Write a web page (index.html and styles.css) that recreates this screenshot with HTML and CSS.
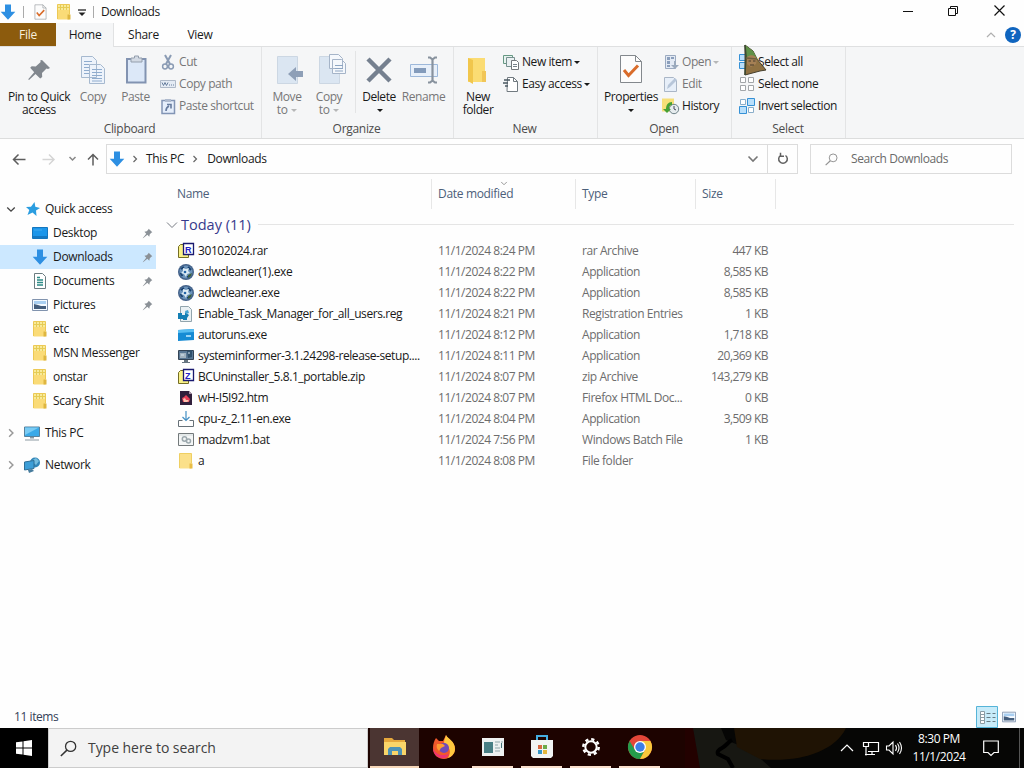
FILE: index.html
```html
<!DOCTYPE html>
<html lang="en">
<head>
  <meta charset="UTF-8" />
  <meta name="viewport" content="width=device-width, initial-scale=1.0" />
  <title>Downloads</title>
  <link rel="stylesheet" href="styles.css">
</head>
<body>
  <svg class="defs" width="0" height="0">
    <symbol id="down-arrow" viewBox="0 0 16 16"><path d="M5 .5h6v7.2h4.3L8 15.7.7 7.7H5z" fill="#2d8fe2"/></symbol>
    <symbol id="folder" viewBox="0 0 16 16"><path d="M1.500.5h12v15h-12z" fill="#fbe08a"/><path d="M11.500 10.500h3v5h-3z" fill="#e9bd45"/><path d="M1.500 15V.5h12v10" fill="none" stroke="#efcf62"/></symbol>
    <symbol id="folder-zip" viewBox="0 0 16 16"><path d="M1.500.5h12v15h-12z" fill="#fadb77"/><path d="M2 1h11v5H2z" fill="#f8ea9a"/><path d="M4.500 1v5M7.500 1v5M10.500 1v5M2 3.500h11" stroke="#e6cc55" fill="none"/><path d="M11.500 10.500h3v5h-3z" fill="#dfb640"/><path d="M1.500 15V.5h12v10" fill="none" stroke="#ecc955"/></symbol>
    <symbol id="pin" viewBox="0 0 16 16"><path d="M9.700 1l5.300 5.200-1.500.8-2.300 2.300-.6 3.400-2.800-2.800L2 14.500l-1 .5.500-1L6.200 8.300 3.500 5.500l3.400-.8L9 2.400z" fill="#8b9197"/></symbol>
    <symbol id="chev-right" viewBox="0 0 8 8"><path d="M2.500 1l3 3-3 3" fill="none" stroke="currentColor" stroke-width="1.200"/></symbol>
    <symbol id="chev-down" viewBox="0 0 12 8"><path d="M1.500 1.500L6 6l4.500-4.500" fill="none" stroke="currentColor" stroke-width="1.600"/></symbol>
    <symbol id="orb" viewBox="0 0 16 16"><circle cx="8" cy="8" r="8" fill="#44628a"/><circle cx="8" cy="8" r="6.500" fill="#6c94bb"/><path d="M3 5l3-2M10 3l3 3M2.500 9l2 3M9 13l3-1" stroke="#16406f" stroke-width="1.800"/><path d="M5 4l3 1 3-1-1 3 2 2-3 1-1 3-2-3-3-1 2-2z" fill="#dcebf4"/><path d="M10 11l4-2-1 3-3 2z" fill="#3c5e3f"/><circle cx="7" cy="8" r="1.300" fill="#2263a6"/></symbol>
    <symbol id="monitor" viewBox="0 0 16 16"><path d="M.5 2h15v9.500H.5z" fill="#39a9e8" stroke="#58819b"/><path d="M1 2.500h14L1 10z" fill="#79cbf4"/><path d="M6 12h4v1.500H6z" fill="#8398a4"/><path d="M1 15h14" stroke="#8b99a2"/></symbol>
    <symbol id="check-page" viewBox="0 0 24 30"><path d="M1.500 1.500h15l6 6v21h-21z" fill="#fcfcfc" stroke="#83888d"/><path d="M16.500 1.500v6h6" fill="none" stroke="#83888d"/><path d="M5 16l4.500 5.500L19 11.500" fill="none" stroke="#d96c2b" stroke-width="3"/></symbol>
    <symbol id="magnifier" viewBox="0 0 16 16"><circle cx="10" cy="6" r="4.800" fill="none" stroke="currentColor" stroke-width="1.200"/><path d="M6.500 9.500L.8 15" stroke="currentColor" stroke-width="1.400"/></symbol>
    <symbol id="photo" viewBox="0 0 16 12"><path d="M.5.500h15v11H.5z" fill="#f5faff" stroke="#8193ae"/><path d="M2 2h12v3H2z" fill="#a9cff1"/><path d="M2 5l4 1 3 1h5v3H2z" fill="#445d7c"/></symbol>
  </svg>

  <div class="window">
    <header class="titlebar">
      <svg class="i16 title-arrow"><use href="#down-arrow"/></svg>
      <span class="bar"></span>
      <svg class="title-check" width="13" height="16"><use href="#check-page"/></svg>
      <svg class="i16 title-folder"><use href="#folder-zip"/></svg>
      <svg class="title-drop" width="8" height="8" viewBox="0 0 8 8"><path d="M0 1h8" stroke="#222" stroke-width="1.300"/><path d="M.5 3.500h7L4 7z" fill="#222"/></svg>
      <span class="bar"></span>
      <span class="title">Downloads</span>
      <div class="controls">
        <svg width="46" height="23"><path d="M18 11.500h10" stroke="#111"/></svg>
        <svg width="46" height="23" fill="none" stroke="#111"><path d="M17.500 8.500h7v7h-7zM19.500 8V6.500h7v7H25"/></svg>
        <svg width="46" height="23"><path d="M17.500 5.500l10 10M27.500 5.500l-10 10" stroke="#111" stroke-width="1.200"/></svg>
      </div>
    </header>

    <nav class="tabs">
      <span class="tab file">File</span>
      <span class="tab home">Home</span>
      <span class="tab share">Share</span>
      <span class="tab view">View</span>
      <div class="tab-tools">
        <svg width="10" height="6" viewBox="0 0 10 6"><path d="M1 5l4-4 4 4" fill="none" stroke="#b0b0b0" stroke-width="1.200"/></svg>
        <span class="help">?</span>
      </div>
    </nav>

    <section class="ribbon">
      <div class="group clipboard">
        <div class="tools">
          <div class="big w70"><svg width="34" height="32" viewBox="0 0 34 32"><path d="M20 7l8 8-2 1-1.500-.5-4.500 4.500.2 4-2 1.500-4.700-4.600L7 27l-.8-.7 6-7-4-4.500 1.500-1.500 4 .3 5-4.500-.5-1.700z" fill="#81878e" transform="translate(0 -1)"/></svg><span>Pin to Quick<br>access</span></div>
          <div class="big w38 off"><svg width="34" height="32" viewBox="0 0 34 32"><path d="M5.500 2.500h11l4 4v17h-15zM13.500 10.500h11l4 4v15h-15z" fill="#edf3fb" stroke="#a6b9cf"/><path d="M8 7.500h8M8 10.500h5M8 13.500h5M8 16.500h5M8 19.500h5M16 15.500h10M16 18.500h10M16 21.500h10M16 24.500h10M16 27h10" stroke="#8facce"/></svg><span>Copy</span></div>
          <div class="big w46 off"><svg width="34" height="32" viewBox="0 0 34 32"><path d="M8 5h18.500v23.500H8z" fill="#dce8f8" stroke="#8293b1" stroke-width="2"/><path d="M12 4h3.500V2h4v2H23v4H12z" fill="#d3dae4" stroke="#939eac"/></svg><span>Paste</span></div>
          <div class="list">
            <div class="small off"><svg class="i16" viewBox="0 0 16 16" fill="none" stroke="#8a9bb4"><path d="M5 1l5 9M11 1L6 10" stroke-width="2"/><circle cx="5" cy="12.500" r="2.400" stroke-width="1.500"/><circle cx="11" cy="12.500" r="2.400" stroke-width="1.500"/></svg>Cut</div>
            <div class="small off"><svg class="i16" viewBox="0 0 16 16" fill="none"><path d="M.5 4.500h15v7H.5z" fill="#e4ebf4" stroke="#aeb9c8"/><path d="M2 6.500l1.500 3L5 6.500l1.500 3L8 6.500M9 9h1m1 0h1m1 0h1" stroke="#687f9e"/></svg>Copy path</div>
            <div class="small off"><svg class="i16" viewBox="0 0 16 16"><path d="M2 2.500h12.500v13H2z" fill="#e5eefb" stroke="#8295b5" stroke-width="1.500"/><path d="M5 1h6v3H5z" fill="#aebace"/><path d="M6 13c0-3 1-4 3-5M7 6.500h4v4" fill="none" stroke="#667b9e" stroke-width="1.600"/></svg>Paste shortcut</div>
          </div>
        </div>
        <div class="caption">Clipboard</div>
      </div>
      <div class="group organize">
        <div class="tools">
          <div class="big w42 off"><svg width="34" height="32" viewBox="0 0 34 32"><path d="M7.500 2.500h20v27h-20z" fill="#dbe6f2" stroke="#ccd7e3"/><path d="M33 17v6h-7v4l-8-7 8-7v4z" fill="#8e9fb7"/></svg><span>Move<br>to <i></i></span></div>
          <div class="big w42 off"><svg width="34" height="32" viewBox="0 0 34 32"><path d="M7.500 2.500h20v27h-20z" fill="#dbe6f2" stroke="#ccd7e3"/><path d="M17.500.5h9l4 4v10h-13zM20.500 5.500h9l4 4v10h-13z" fill="#f5f8fc" stroke="#a5b4c8"/><path d="M23 11.500h8M23 14.500h8M23 17h8" stroke="#8da5c2"/></svg><span>Copy<br>to <i></i></span></div>
          <span class="split"></span>
          <div class="big w40"><svg width="34" height="32" viewBox="0 0 34 32"><path d="M6 5l22 22M28 5L6 27" stroke="#75808f" stroke-width="4.500"/></svg><span>Delete<br><i></i></span></div>
          <div class="big w48 off"><svg width="34" height="32" viewBox="0 0 34 32"><path d="M3.500 10.500h27v12h-27z" fill="#e8f0fa" stroke="#9db8da"/><path d="M7 14h12v5H7z" fill="#839bbb"/><path d="M21 3.500h2l2.500 2v21l-2.500 2h-2M30 3.500h-2l-2.500 2M30 28.500h-2l-2.500-2" fill="none" stroke="#88929e" stroke-width="2.200"/></svg><span>Rename</span></div>
        </div>
        <div class="caption">Organize</div>
      </div>
      <div class="group new">
        <div class="tools">
          <div class="big w40"><svg width="34" height="32" viewBox="0 0 34 32"><path d="M7 4h17v24H7z" fill="#fbdc73"/><path d="M7 4l5 2v24l-5-3z" fill="#f1c64c"/><path d="M21 17h4v11h-4z" fill="#f1c658"/></svg><span>New<br>folder</span></div>
          <div class="list">
            <div class="small"><svg class="i16" viewBox="0 0 16 16"><path d="M.5 1.500h9v8h-9z" fill="#e7f2ef" stroke="#659883"/><path d="M3.500 3.500h8v9h-8z" fill="#eaf0f2" stroke="#77918f"/><path d="M8.500 6.500h5l2 2v7h-7z" fill="#fff" stroke="#74777b"/><path d="M10 10.500h4M10 12.500h4" stroke="#77818a"/></svg>New item <i></i></div>
            <div class="small"><svg class="i16" viewBox="0 0 16 16"><path d="M4.500 1.500h6l4 4v10H4z" fill="#fff" stroke="#717a80"/><path d="M10.500 1.500v4h4" fill="none" stroke="#717a80"/><path d="M1 4h6M0 7h5M2 10h3" stroke="#4b5963" stroke-width="1.300"/></svg>Easy access <i></i></div>
          </div>
        </div>
        <div class="caption">New</div>
      </div>
      <div class="group open">
        <div class="tools">
          <div class="big w56"><svg class="properties" width="24" height="30"><use href="#check-page"/></svg><span>Properties<br><i></i></span></div>
          <div class="list">
            <div class="small off"><svg class="i16" viewBox="0 0 16 16"><path d="M2.500 1.500h10v13h-10z" fill="#e3eaf4" stroke="#9baac0"/><path d="M4 3h3v3H4zM4 7h3v3H4zM4 11h3v2H4zM8 3h3v2H8z" fill="#8b9fbc"/><path d="M11 7h2v4h3l-4 4-4-4h3z" fill="#9baabd"/></svg>Open <i></i></div>
            <div class="small off"><svg class="i16" viewBox="0 0 16 16"><path d="M1.500 1.500h9l3 3v11h-12z" fill="#e7eff9" stroke="#aab6c6"/><path d="M4 13l1-4 7-7 2 2-7 7z" fill="#b7c6d9"/></svg>Edit</div>
            <div class="small"><svg class="i16" viewBox="0 0 16 16"><path d="M-1 .5h12v13H-1z" fill="#f6df78"/><circle cx="11" cy="11" r="4.700" fill="#e6ecee" stroke="#6e8288"/><path d="M11 8v3l2 1" fill="none" stroke="#445"/><path d="M9 4v3c-2 0-3 1-3 4h2l-4 4-4-4h3c0-4 2-7 6-7z" fill="#46a135"/></svg>History</div>
          </div>
        </div>
        <div class="caption">Open</div>
      </div>
      <div class="group select">
        <div class="tools">
          <div class="list">
            <div class="small"><svg class="i16" viewBox="0 0 16 16" fill="#b9dffb" stroke="#3591d6"><path d="M.5.5h6v6h-6zM8.500.5h6v6h-6zM.5 8.500h6v6h-6zM8.500 8.500h6v6h-6z"/></svg>Select all</div>
            <div class="small"><svg class="i16" viewBox="0 0 16 16" fill="#fff" stroke="#a3a6a9"><path d="M1.500 1.500h5v5h-5zM9.500 1.500h5v5h-5zM1.500 9.500h5v5h-5zM9.500 9.500h5v5h-5z"/></svg>Select none</div>
            <div class="small"><svg class="i16" viewBox="0 0 16 16"><path d="M1.500 1.500h5v5h-5zM9.500 9.500h5v5h-5z" fill="#fff" stroke="#8aaeca"/><path d="M8.500.5h7v7h-7zM.5 8.500h7v7h-7z" fill="#b9dffb" stroke="#3591d6"/></svg>Invert selection</div>
          </div>
        </div>
        <div class="caption">Select</div>
        <svg class="cursor" width="24" height="32" viewBox="0 0 24 32"><path d="M2 1l8 6 4 8 9 11-6 1-15 4z" fill="#8f7142" stroke="#46402e"/><path d="M2 1l8 6 5 9-12-3z" fill="#5f9148"/><path d="M2 1l1 11-1 19" fill="none" stroke="#3b4830" stroke-width="1.500"/><path d="M4 13c4-3 8-2 10 2l-1 5-5 3-4-3z" fill="#a58055"/><path d="M5.500 17h2.500M10 17h2.500M7 21h4" stroke="#463c2d"/><path d="M3 14l11 1" stroke="#6d6040" stroke-width="1.500"/></svg>
      </div>
    </section>

    <div class="address-row">
      <div class="nav-buttons">
        <svg width="106" height="30" fill="none" stroke="#5d5d5d" stroke-width="1.500"><path d="M18.500 10.500l-5 5 5 5M14 15.500h11.500"/><path d="M49 10.500l5 5-5 5M53 15.500H42.500" stroke="#d5d5d5"/><path d="M69.500 13l3 3 3-3" stroke="#888"/><path d="M88 15.500l5-5 5 5M93 11v10.500"/></svg>
      </div>
      <div class="address">
        <svg class="i16 address-icon"><use href="#down-arrow"/></svg>
        <svg class="crumb-arrow"><use href="#chev-right"/></svg>
        <span>This PC</span>
        <svg class="crumb-arrow second"><use href="#chev-right"/></svg>
        <span>Downloads</span>
        <svg class="address-drop" width="12" height="8"><use href="#chev-down"/></svg>
        <span class="refresh"><svg width="14" height="14" viewBox="0 0 14 14" fill="none" stroke="#606060" stroke-width="1.500"><path d="M9.500 3.500a4.300 4.300 0 1 1-5 0M4.500.8v3.400H8"/></svg></span>
      </div>
      <div class="search"><svg width="13" height="13"><use href="#magnifier"/></svg>Search Downloads</div>
    </div>

    <main class="main">
      <aside class="sidebar">
        <div class="side root"><svg class="expander open-arrow"><use href="#chev-down"/></svg><svg width="14" height="14" viewBox="0 0 14 14"><path d="M8.500 0l.8 4.800L14 6l-4 2.500.5 5.500-4-3.500L1.500 13l1.800-5L0 5l5-.3z" fill="#2a9de0"/></svg><span>Quick access</span></div>
        <div class="side"><svg class="i16" viewBox="0 0 16 16"><path d="M.5 2.500h15v11H.5z" fill="#1c96ea" stroke="#1476be"/><path d="M1 12h14" stroke="#0e5b99"/><path d="M2 5h8" stroke="#42acf0"/></svg><span>Desktop</span><svg class="side-pin"><use href="#pin"/></svg></div>
        <div class="side selected"><svg class="i16"><use href="#down-arrow"/></svg><span>Downloads</span><svg class="side-pin"><use href="#pin"/></svg></div>
        <div class="side"><svg class="i16" viewBox="0 0 16 16"><path d="M2.500.5h8l3 3v12h-11z" fill="#fff" stroke="#6b7c80"/><path d="M5 4.500h3M5 7h6M5 9.500h6M5 12h6" stroke="#2d8b86" stroke-width="1.300"/></svg><span>Documents</span><svg class="side-pin"><use href="#pin"/></svg></div>
        <div class="side"><svg class="i16"><use href="#photo"/></svg><span>Pictures</span><svg class="side-pin"><use href="#pin"/></svg></div>
        <div class="side"><svg class="i16"><use href="#folder-zip"/></svg><span>etc</span></div>
        <div class="side"><svg class="i16"><use href="#folder-zip"/></svg><span>MSN Messenger</span></div>
        <div class="side"><svg class="i16"><use href="#folder-zip"/></svg><span>onstar</span></div>
        <div class="side"><svg class="i16"><use href="#folder-zip"/></svg><span>Scary Shit</span></div>
        <div class="side root spaced"><svg class="expander"><use href="#chev-right"/></svg><svg class="i16"><use href="#monitor"/></svg><span>This PC</span></div>
        <div class="side root spaced"><svg class="expander"><use href="#chev-right"/></svg><svg class="i16" viewBox="0 0 16 16"><circle cx="11" cy="5.500" r="5" fill="#3286b8"/><path d="M7 4l5-3 3 3-3 4z" fill="#75bddf"/><path d="M.5 5l9.500-1.500v8L.5 13z" fill="#3d9ed7" stroke="#2f6f97"/><path d="M4 13l4-1 2 2-5 2z" fill="#477c9d"/></svg><span>Network</span></div>
      </aside>

      <div class="files">
        <div class="row columns"><span>Name</span><span>Date modified<svg class="sort" width="8" height="5"><use href="#chev-down"/></svg></span><span>Type</span><span>Size</span></div>
        <div class="group-title"><svg width="12" height="8" viewBox="0 0 12 8"><path d="M1 1.500l5 5 5-5" fill="none" stroke="#777b83"/></svg><span>Today (11)</span><hr></div>
        <div class="row"><span class="name"><svg class="i16" viewBox="0 0 16 16"><path d="M.5 3.500l2-2h4v10h4v3H.5z" fill="#f9f187" stroke="#746d24"/><path d="M5.500.5h10v11h-10z" fill="#fff" stroke="#19196f" stroke-width="1.300"/><text x="7" y="9.500" class="badge">R</text></svg>30102024.rar</span><span class="date">11/1/2024 8:24 PM</span><span>rar Archive</span><span>447 KB</span></div>
        <div class="row"><span class="name"><svg class="i16"><use href="#orb"/></svg>adwcleaner(1).exe</span><span class="date">11/1/2024 8:22 PM</span><span>Application</span><span>8,585 KB</span></div>
        <div class="row"><span class="name"><svg class="i16"><use href="#orb"/></svg>adwcleaner.exe</span><span class="date">11/1/2024 8:22 PM</span><span>Application</span><span>8,585 KB</span></div>
        <div class="row"><span class="name"><svg class="i16" viewBox="0 0 16 16"><path d="M2.500.5h8l3 3v12h-11z" fill="#eaf1f4" stroke="#91a4ad"/><path d="M0 7h4v2h3V6l4 3-2 3v2H5v-1H0z" fill="#147fb4"/><path d="M7 5l3-1 1 3-3 1z" fill="#43a3d1"/></svg>Enable_Task_Manager_for_all_users.reg</span><span class="date">11/1/2024 8:21 PM</span><span>Registration Entries</span><span>1 KB</span></div>
        <div class="row"><span class="name"><svg class="i16" viewBox="0 0 16 16"><path d="M0 3l16-1v11L0 14z" fill="#168bd4"/><path d="M0 3l16-1v3L0 6z" fill="#58bdf1"/><path d="M8 9h5" stroke="#c9edff" stroke-width="1.500"/></svg>autoruns.exe</span><span class="date">11/1/2024 8:12 PM</span><span>Application</span><span>1,718 KB</span></div>
        <div class="row"><span class="name"><svg class="i16" viewBox="0 0 16 16"><path d="M.5 2.500h15v9H.5z" fill="#5a7894" stroke="#344454"/><path d="M2 5h6v5H2z" fill="#a2b3bf"/><path d="M9 3l5-1v7l-4 1z" fill="#30516c"/><path d="M10 5h2M3 7h3" stroke="#d6e7f2"/><path d="M6 12h4v2h2v1H4v-1h2z" fill="#667581"/></svg>systeminformer-3.1.24298-release-setup....</span><span class="date">11/1/2024 8:11 PM</span><span>Application</span><span>20,369 KB</span></div>
        <div class="row"><span class="name"><svg class="i16" viewBox="0 0 16 16"><path d="M.5 3.500l2-2h4v10h4v3H.5z" fill="#f9f187" stroke="#746d24"/><path d="M5.500.5h10v11h-10z" fill="#fff" stroke="#19196f" stroke-width="1.300"/><text x="7" y="9.500" class="badge">Z</text></svg>BCUninstaller_5.8.1_portable.zip</span><span class="date">11/1/2024 8:07 PM</span><span>zip Archive</span><span>143,279 KB</span></div>
        <div class="row"><span class="name"><svg class="i16" viewBox="0 0 16 16"><path d="M2 1h9l3 3v11H2z" fill="#31203c"/><path d="M11 1v3h3z" fill="#a790a4"/><path d="M4 8l2-1 2-2 4 4-1 3H5z" fill="#e84059"/><path d="M5 9l2-1 1 2h2l1 1-2 1H6z" fill="#ffc4b1"/></svg>wH-I5I92.htm</span><span class="date">11/1/2024 8:07 PM</span><span>Firefox HTML Doc...</span><span>0 KB</span></div>
        <div class="row"><span class="name"><svg class="i16" viewBox="0 0 16 16" fill="none"><path d="M4.500 9.500h-4v6h15v-6h-4" stroke="#667077"/><path d="M8 0v9M4.500 6L8 9.500 11.500 6" stroke="#438fc4" stroke-width="1.200"/></svg>cpu-z_2.11-en.exe</span><span class="date">11/1/2024 8:04 PM</span><span>Application</span><span>3,509 KB</span></div>
        <div class="row"><span class="name"><svg class="i16" viewBox="0 0 16 16"><path d="M.5 1.500h15v12H.5z" fill="#f4f6f6" stroke="#73797b"/><path d="M1 3h14" stroke="#d4dcdd"/><circle cx="6.500" cy="7" r="2.200" fill="none" stroke="#9ca8ad" stroke-width="1.500"/><circle cx="10.500" cy="9" r="2" fill="none" stroke="#9ca8ad" stroke-width="1.500"/></svg>madzvm1.bat</span><span class="date">11/1/2024 7:56 PM</span><span>Windows Batch File</span><span>1 KB</span></div>
        <div class="row"><span class="name"><svg class="i16"><use href="#folder"/></svg>a</span><span class="date">11/1/2024 8:08 PM</span><span>File folder</span><span></span></div>
      </div>
    </main>

    <footer class="status"><span>11 items</span>
      <svg class="details-view" width="22" height="22" viewBox="0 0 22 22"><path d="M.5.5h21v21H.5z" fill="#c7ebf9" stroke="#55b4d8"/><path d="M4.500 5.500h4v12h-4zM4.500 8.500h4M4.500 11.500h4M4.500 14.500h4" fill="#fff" stroke="#8b9ca4"/><path d="M10.500 7.500h4m2 0h3M10.500 11.500h4m2 0h3M10.500 15.500h4m2 0h3" stroke="#667b84"/></svg>
      <svg width="14" height="12"><use href="#photo"/></svg>
    </footer>
  </div>

  <footer class="taskbar">
    <svg class="wall" width="339" height="40"><path d="M0 0h339v40H0z" fill="#060605"/><path d="M0 0h10l5 40H0z" fill="#230100"/><path d="M8 0h28l5 12 25 10 20 18H15z" fill="#171712"/><path d="M49 0h112c-12 25-50 35-86 31L52 19z" fill="#1f1304"/><path d="M47 12c-4 2-6 6-10 8s-5 4-4 6l10 5 5 9" fill="none" stroke="#000" stroke-width="4"/></svg>
    <div class="start"><svg width="16" height="16" viewBox="0 0 16 16" fill="#fff"><path d="M0 2.300l6.500-.9v6.100H0zM7.500 1.200L16 0v7.500H7.500zM0 8.500h6.500v6.100L0 13.700zM7.500 8.500H16V16l-8.500-1.200z"/></svg></div>
    <div class="task-search"><svg width="17" height="17"><use href="#magnifier"/></svg>Type here to search</div>
    <div class="apps">
      <div class="app active"><svg width="22" height="20" viewBox="0 0 22 20"><path d="M0 1h8l2 2h11v5H0z" fill="#e5a83c"/><path d="M0 5h22v13H0z" fill="#f9d569"/><path d="M4 18v-6l2-2h10l2 2v6h-4v-4H8v4z" fill="#4d93b6"/></svg></div>
      <div class="app"><svg width="24" height="24" viewBox="0 0 24 24"><path d="M4 3l3 3h4l3-6c1 4 7 5 9 12 1 7-5 12-11 12S1 20 1 13c0-4 1-7 3-10z" fill="#f1592b"/><path d="M14 0c2 4 9 6 9 14 0 5-4 8-7 9 4-7 1-11-3-14-2-2 0-5 1-9z" fill="#ffc83f"/><path d="M1 13c3 8 10 8 16 6-2 4-5 5-8 4-5-1-8-5-8-10z" fill="#ed3470"/><circle cx="12" cy="13" r="5" fill="#704bb8"/><path d="M5 9h6l2 2-4 2-2 3c-2-2-3-4-2-7z" fill="#ff9b31"/></svg></div>
      <div class="app running"><svg width="22" height="18" viewBox="0 0 22 18"><path d="M0 0h22v18H0z" fill="#eef1f1"/><path d="M2 4h9v11H2z" fill="#497f85"/><path d="M13 4h5M13 7h3M13 10h5M13 13h5M19 4h2" stroke="#8fa5a9"/><path d="M19.500 5v5" stroke="#457177"/></svg></div>
      <div class="app running"><svg width="24" height="24" viewBox="0 0 24 24"><path d="M7 5V1h10v4" fill="none" stroke="#45aee1" stroke-width="2"/><path d="M1 5h22v16l-2 2H3l-2-2z" fill="#f2f5f4"/><path d="M8 10h4v4H8z" fill="#d86a42"/><path d="M13 10h4v4h-4z" fill="#6cab4b"/><path d="M8 15h4v4H8z" fill="#3797c6"/><path d="M13 15h4v4h-4z" fill="#e4b83e"/></svg></div>
      <div class="app running"><svg width="20" height="20" viewBox="0 0 20 20" fill="none" stroke="#fff"><circle cx="10" cy="10" r="5.700" stroke-width="2"/><circle cx="10" cy="10" r="7.700" stroke-width="2.500" stroke-dasharray="3.200 2.840"/></svg></div>
      <div class="app running"><svg width="24" height="24" viewBox="0 0 24 24"><circle cx="12" cy="12" r="12" fill="#e44638"/><path d="M1.600 6A12 12 0 0 0 12 24l5-9-10 0z" fill="#249c4b"/><path d="M12 6h10.400A12 12 0 0 1 12 24l5-9z" fill="#f8c83b"/><circle cx="12" cy="12" r="6" fill="#fff"/><circle cx="12" cy="12" r="4.700" fill="#3d7ee6"/></svg></div>
    </div>
    <div class="tray">
      <svg width="76" height="40" fill="none" stroke="#fff" stroke-width="1.200"><path d="M5 23l6-6 6 6"/><path d="M33 14.500h9.500v9H32M27.500 14.500h5v4h-5zM30 18.500v9M29 26.500h10M36 24v3"/><path d="M50.500 18h2.500l4-4v12l-4-4h-2.500zM59.500 17q2 3 0 6M61.500 15.500q3 4.500 0 9M63.500 14q4 6 0 12" stroke-width="1.100"/></svg>
      <div class="clock"><span>8:30 PM</span><span>11/1/2024</span></div>
      <svg class="notice" width="16" height="17" fill="none" stroke="#fff" stroke-width="1.200"><path d="M.7 1h14.600v11.500H11L8 15.500l-3-3H.7z"/></svg>
      <span class="edge"></span>
    </div>
  </footer>
</body>
</html>
```
FILE: styles.css
```css
* { box-sizing: border-box; }
body { margin: 0; width: 1024px; height: 768px; overflow: hidden; font: 12px/14px "Open Sans", "Noto Sans", sans-serif; letter-spacing: -0.42px; color: #191919; background: #fff; }
svg { display: block; flex: none; overflow: visible; }
.defs { position: absolute; }
.i16 { width: 16px; height: 16px; }

.window { height: 728px; display: flex; flex-direction: column; background: #fefefe; }
.titlebar { height: 23px; flex: none; display: flex; align-items: center; }
.title-arrow { margin-right: 7px; }
.bar { width: 1px; height: 12px; background: #aaa; }
.title-check { margin-left: 10px; }
.title-folder { margin: 0 5px 0 9px; }
.title-drop { margin: 2px 7px 0 1px; }
.title { margin-left: 7px; }
.controls { display: flex; margin-left: auto; margin-right: 1px; }

.tabs { height: 24px; flex: none; display: flex; border-bottom: 1px solid #dfe0e1; }
.tab { text-align: center; line-height: 24px; letter-spacing: -0.3px; }
.file { width: 56px; color: #f7eedb; background: #8c5b0d; }
.home { width: 58px; height: 24px; padding-left: 1px; background: #f5f6f7; border-right: 1px solid #e1e2e3; }
.share { width: 59px; }
.view { width: 54px; }
.tab-tools { margin-left: auto; display: flex; align-items: center; gap: 9px; padding-right: 3px; }
.help { width: 16px; height: 16px; border-radius: 50%; background: #1065bf; color: #fff; font-weight: bold; line-height: 16px; text-align: center; }

.ribbon { height: 92px; flex: none; display: flex; background: #f5f6f7; border-bottom: 1px solid #dcdddd; }
.group { position: relative; border-right: 1px solid #e3e4e5; }
.clipboard { width: 262px; padding-left: 4px; }
.organize { width: 192px; padding-left: 4px; }
.new { width: 144px; padding-left: 4px; }
.open { width: 134px; padding-left: 5px; }
.select { width: 114px; padding-left: 2px; }
.tools { display: flex; height: 75px; }
.big { padding-top: 7px; display: flex; flex-direction: column; align-items: center; text-align: center; }
.big span { margin-top: 4px; line-height: 13px; white-space: nowrap; }
.w70 { width: 70px; }
.w38 { width: 38px; }
.w46 { width: 47px; }
.w42 { width: 42px; }
.w40 { width: 40px; }
.w48 { width: 49px; }
.w56 { width: 56px; }
.properties { margin-bottom: 2px; }
.off { color: #777; }
i { display: inline-block; vertical-align: 2px; border: 3px solid transparent; border-top-color: currentColor; border-bottom: 0; margin-left: 1px; }
.off i { opacity: .5; }
.split { width: 1px; height: 62px; margin: 4px 3px 0 5px; background: #e3e4e5; }
.list { margin-left: 5px; padding-top: 4px; }
.clipboard .list { margin-left: 1px; }
.open .list { margin-left: 4px; }
.small { height: 22px; display: flex; align-items: center; gap: 3px; white-space: nowrap; }
.small i { margin: 0 0 0 -1px; }
.caption { margin-right: 6px; text-align: center; line-height: 14px; letter-spacing: -0.3px; color: #4c4c4c; }
.select .caption { margin-right: 3px; }
.cursor { position: absolute; left: 11px; top: -3px; }

.address-row { height: 40px; flex: none; padding-top: 5px; display: flex; }
.nav-buttons { width: 106px; }
.address { width: 692px; height: 30px; border: 1px solid #dcdcdc; display: flex; align-items: center; padding-left: 2px; letter-spacing: -0.35px; }
.crumb-arrow { width: 8px; height: 8px; margin: 0 7px 0 6px; color: #666; }
.second { margin: 0 8px 0 7px; }
.address-drop { margin-left: auto; margin-right: 8px; color: #777; }
.refresh { width: 30px; height: 28px; border-left: 1px solid #dcdcdc; display: flex; align-items: center; justify-content: center; }
.search { width: 202px; height: 30px; margin-left: 12px; border: 1px solid #dcdcdc; display: flex; align-items: center; padding-left: 14px; gap: 13px; color: #6a6a6a; }
.task-search svg { color: #333; }
.search svg { color: #929292; }

.main { flex: 1; display: flex; }
.sidebar { width: 166px; padding-top: 18px; letter-spacing: -0.32px; }
.side { width: 156px; height: 24px; display: flex; align-items: center; gap: 5px; padding-left: 32px; white-space: nowrap; }
.side.root { padding-left: 6px; }
.spaced { margin-top: 8px; }
.expander { width: 10px; height: 10px; margin-right: 3px; color: #999; }
.open-arrow { height: 7px; margin-right: 5px; color: #444; }
.selected { background: #cce8ff; }
.side-pin { width: 11px; height: 11px; margin: 0 3px 0 auto; }

.files { width: 858px; }
.row { height: 21px; padding-left: 11px; display: grid; grid-template-columns: 261px 144px 120px 66px; align-items: center; white-space: nowrap; color: #6d6d6d; }
.row span:nth-child(4) { text-align: right; letter-spacing: -0.55px; }
.row .date { letter-spacing: -0.47px; }
.name { display: flex; align-items: center; gap: 4px; margin-left: 1px; color: #191919; }
.badge { font: bold 9px "Liberation Sans", sans-serif; fill: #2022c5; }
.columns { height: 30px; grid-template-columns: 261px 144px 120px 74px; color: #4c607a; }
.row.columns span { position: relative; height: 30px; line-height: 30px; letter-spacing: -0.32px; }
.columns span::after { content: ""; position: absolute; right: 6px; top: 0; width: 1px; height: 30px; background: #e7e7e7; }
.row.columns span:nth-child(4) { text-align: left; }
.columns span:last-child::after { right: 0; }
.sort { position: absolute; left: 62px; top: 2px; color: #999; }
.group-title { height: 31px; display: flex; align-items: center; gap: 3px; color: #363a8c; font-size: 14.5px; letter-spacing: 0; }
.group-title hr { flex: none; width: 756px; height: 1px; border: 0; margin: 0 0 0 4px; background: #e5e5e5; }

.status { height: 22px; flex: none; display: flex; align-items: center; padding: 0 8px 0 14px; gap: 4px; color: #344158; }
.details-view { margin-left: auto; }

.taskbar { position: relative; height: 40px; display: flex; background: #1d0300; color: #fff; }
.wall { position: absolute; right: 0; top: 0; }
.start { width: 48px; display: flex; align-items: center; justify-content: center; background: #000; }
.task-search { width: 320px; background: #f3f3f3; border: 1px solid #ccc; color: #404040; display: flex; align-items: center; padding-left: 11px; gap: 11px; font-size: 14px; letter-spacing: -0.05px; }
.apps { display: flex; margin-left: 2px; }
.app { width: 49px; display: flex; align-items: center; justify-content: center; border-bottom: 2px solid transparent; }
.active { background: #4b3532; border-color: #f6d7b9; }
.running { border-image: linear-gradient(90deg, transparent 5px, #f9dfcc 5px, #f9dfcc 44px, transparent 44px) 1; border-width: 0 0 2px; }
.tray { position: relative; margin-left: auto; display: flex; align-items: center; }
.clock { width: 64px; margin-right: 12px; margin-left: -5px; line-height: 18px; display: flex; flex-direction: column; align-items: center; }
.notice { margin-right: 20px; }
.edge { width: 1px; height: 40px; background: #555; margin-right: 4px; }
```
